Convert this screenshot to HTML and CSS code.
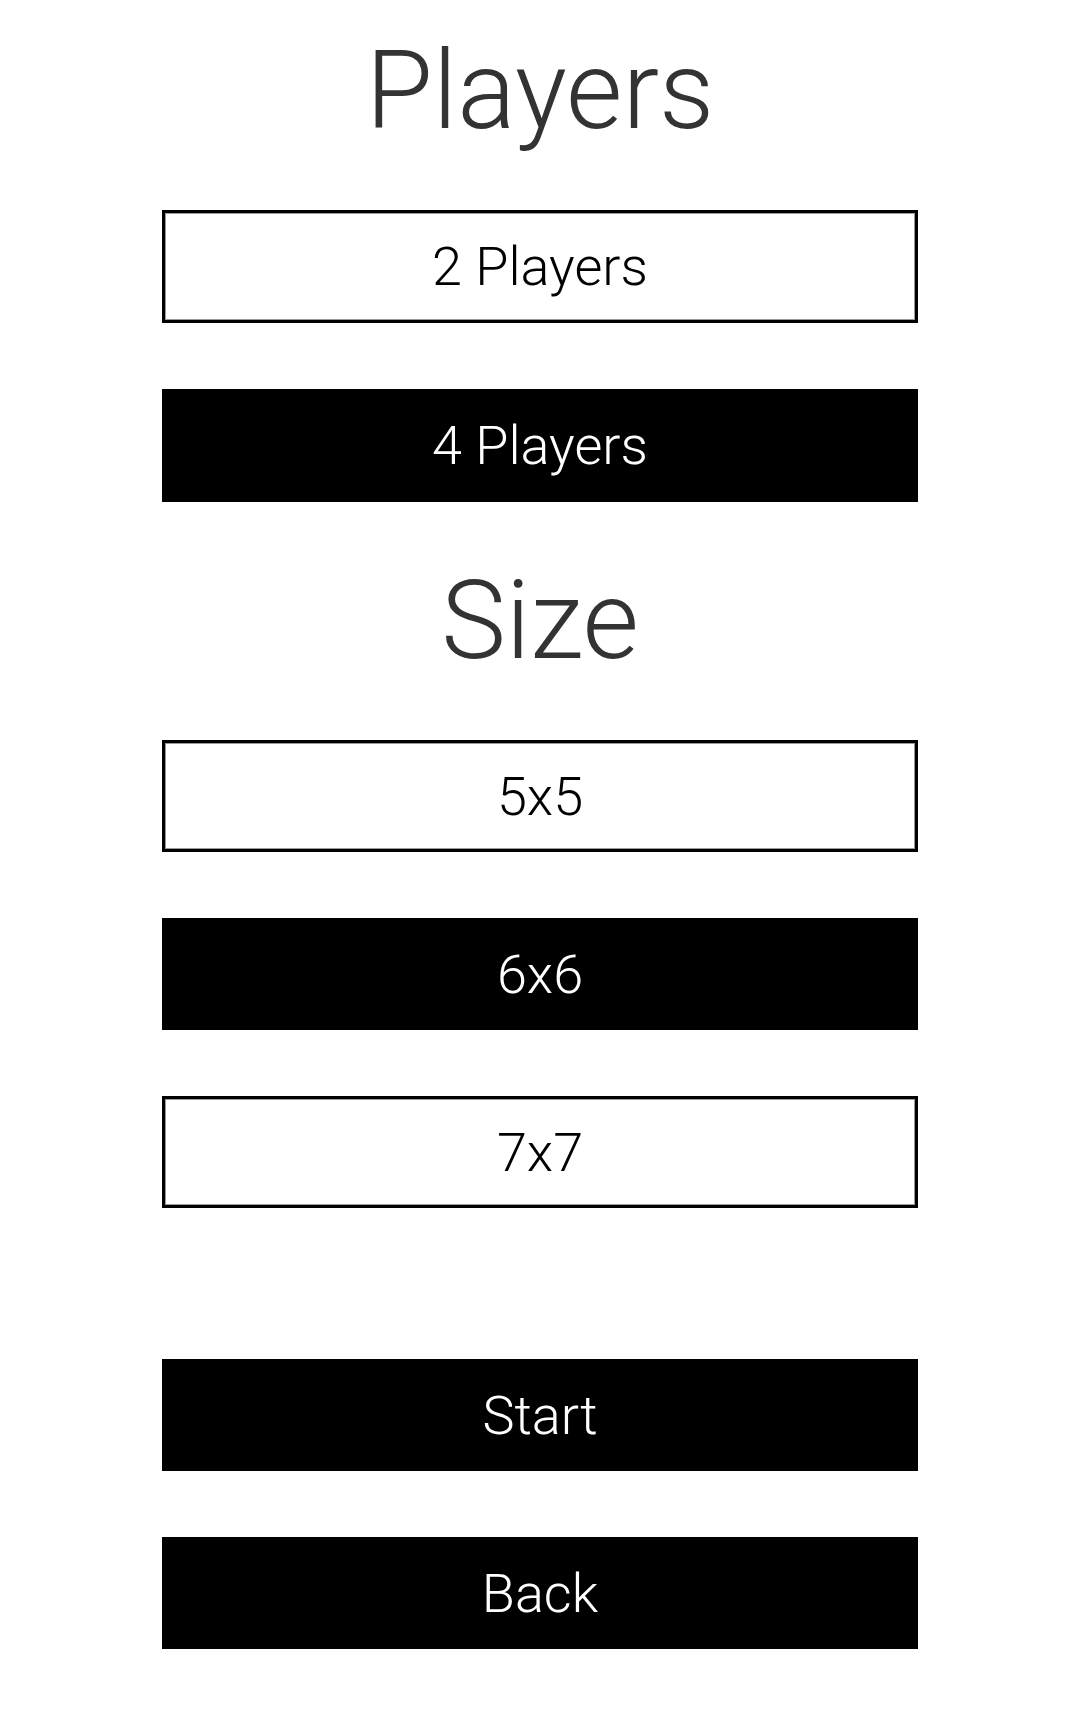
FILE: index.html
```html
<!DOCTYPE html>
<html lang="en">
<head>
    <meta charset="UTF-8">
    <meta name="viewport" content="width=device-width, initial-scale=1.0">
    <title>Game Setup</title>
    <link rel="stylesheet" href="styles.css">
</head>
<body>

<main class="menu">
    <h1 class="title title-first">Players</h1>
    <div class="options players">
        <button class="option outline">2 Players</button>
        <button class="option filled">4 Players</button>
    </div>

    <h1 class="title">Size</h1>
    <div class="options">
        <button class="option outline">5x5</button>
        <button class="option filled">6x6</button>
        <button class="option outline">7x7</button>
    </div>

    <div class="options actions">
        <button class="option filled">Start</button>
        <button class="option filled">Back</button>
    </div>
</main>

</body>
</html>
```

FILE: styles.css
```css
body {
    font-family: Roboto, "Liberation Sans", Arial, sans-serif;
    font-weight: 300;
    background-color: #fff;
    margin: 0;
    padding: 0;
}
.menu {
    width: 756px;
    margin: 0 auto;
    display: flex;
    flex-direction: column;
}
.title {
    font-size: 109px;
    font-weight: 300;
    line-height: 130px;
    color: #333;
    text-align: center;
    margin: 54px 0;
}
.title-first {
    margin-top: 26px;
}
.options {
    display: flex;
    flex-direction: column;
    gap: 66px;
}
.players .option {
    height: 113px;
}
.actions {
    margin-top: 151px;
}
.option {
    box-sizing: border-box;
    height: 112px;
    width: 100%;
    font-family: inherit;
    font-size: 54px;
    font-weight: 300;
    padding: 0;
    border: 3px solid #000;
    cursor: pointer;
}
.outline {
    background-color: #fff;
    color: #000;
    box-shadow: inset 0 0 0 1px #999;
}
.filled {
    background-color: #000;
    color: #fff;
}
```
